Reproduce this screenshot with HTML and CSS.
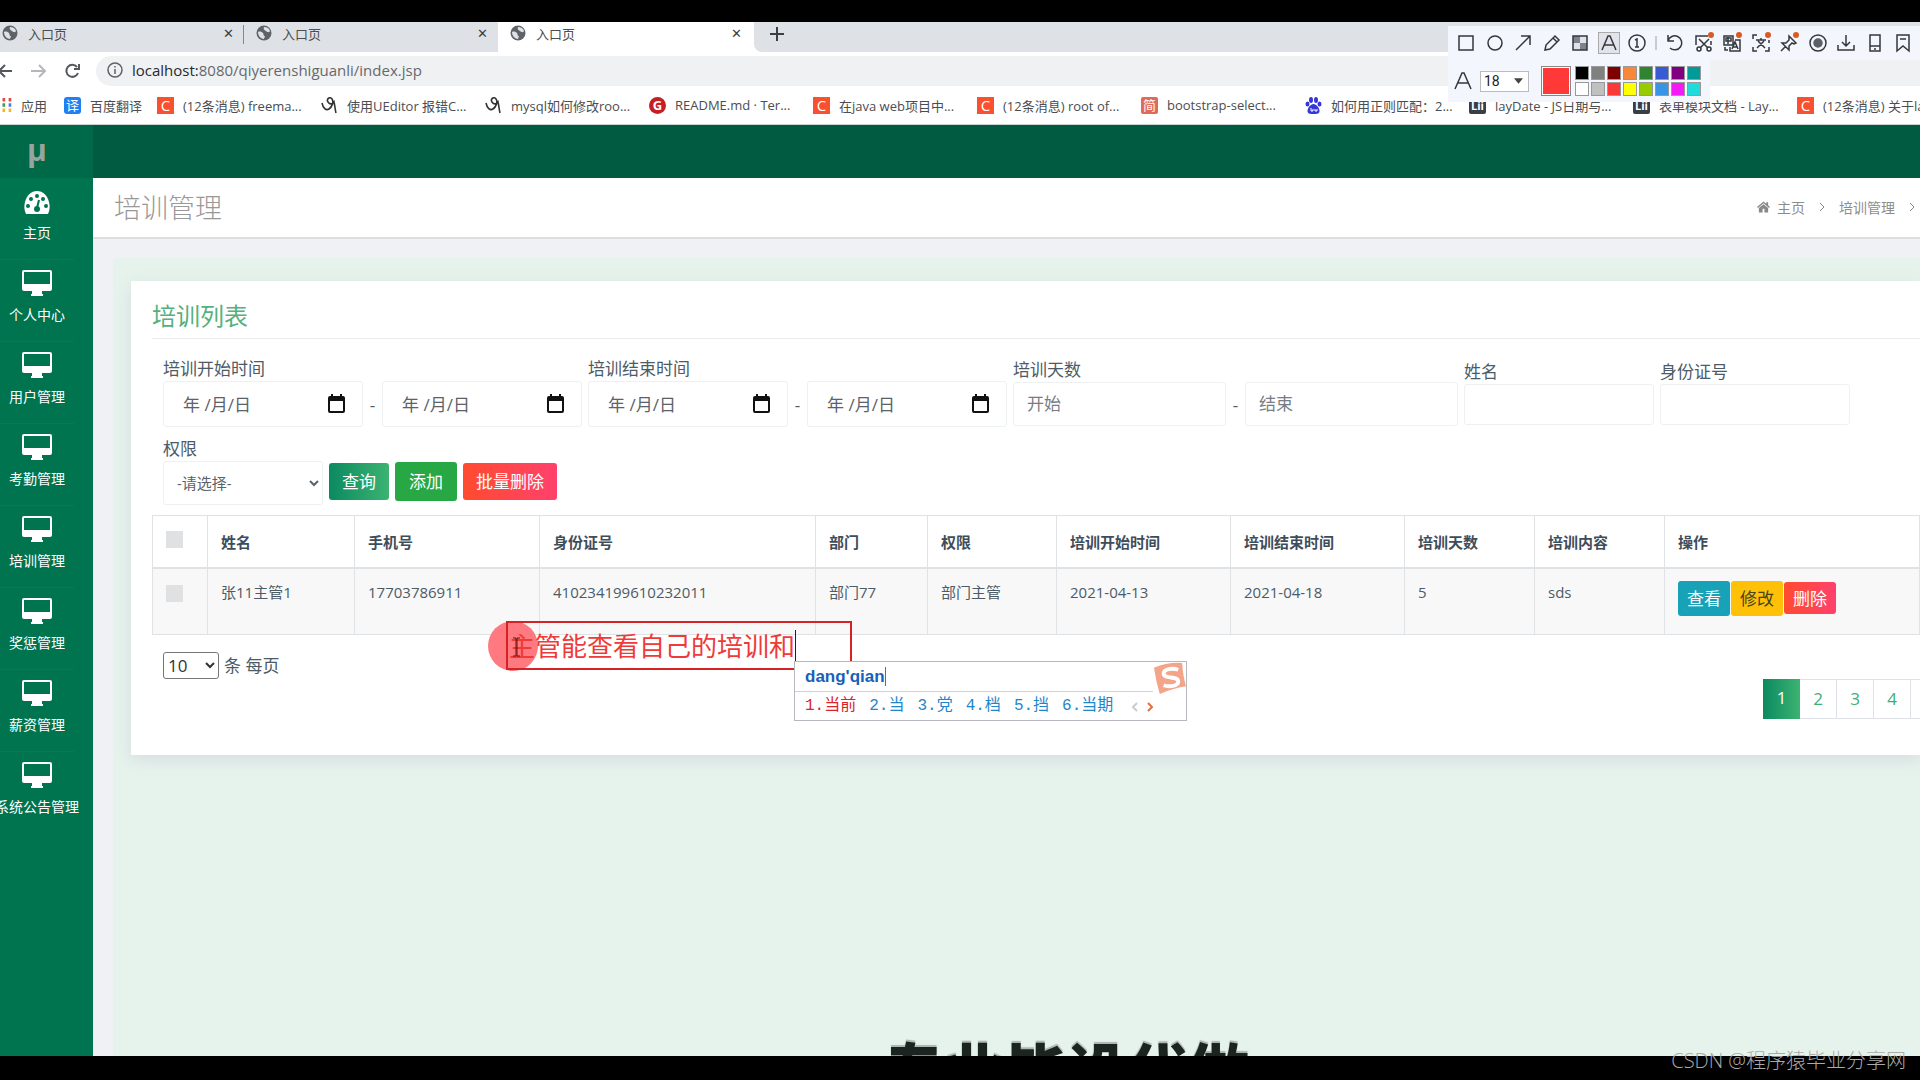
FILE: index.html
```html
<!DOCTYPE html>
<html lang="zh-CN">
<head>
    <meta charset="UTF-8">
    <meta name="viewport" content="width=device-width, initial-scale=1.0">
    <title>入口页</title>
    <link rel="stylesheet" href="styles.css">
</head>
<body>
    <svg class="sprite" aria-hidden="true">
        <symbol id="i-globe" viewBox="0 0 16 16"><circle cx="8" cy="8" r="7.500" fill="#5f6368"/><path d="M2 7c2-1 4 0 5 1s0 3 2 3l-1 3c-3 0-6-3-6-7zM8 2c3 0 5 1 6 4-1 2-3 1-4 0S7 5 8 2z" fill="#dee1e6"/></symbol>
        <symbol id="i-monitor" viewBox="0 0 30 26"><path fill-rule="evenodd" d="M2 0h26a2 2 0 0 1 2 2v17a2 2 0 0 1-2 2h-8v3h1v2H9v-2h1v-3H2a2 2 0 0 1-2-2V2a2 2 0 0 1 2-2zM2 2v12h26V2z" fill="#fff"/></symbol>
        <symbol id="i-calendar" viewBox="0 0 17 19"><path fill-rule="evenodd" d="M3 0h2v2h7V0h2v2h1a2 2 0 0 1 2 2v13a2 2 0 0 1-2 2H2a2 2 0 0 1-2-2V4a2 2 0 0 1 2-2h1zM2 7v10h13V7z" fill="#111"/></symbol>
        <symbol id="i-swirl" viewBox="0 0 17 17"><path d="M1 6c1 5 4 8 7 6s5-7 3-10-6 0-4 3 5 2 6 0c1 4 1 7 2 11" fill="none" stroke="#333" stroke-width="1.600"/></symbol>
    </svg>

    <div class="screen">
        <header class="browser">
            <div class="tabs">
                <div class="tab"><svg><use href="#i-globe"/></svg><span>入口页</span><button aria-label="关闭">✕</button></div>
                <div class="tab tab-second"><svg><use href="#i-globe"/></svg><span>入口页</span><button aria-label="关闭">✕</button></div>
                <div class="tab active"><svg><use href="#i-globe"/></svg><span>入口页</span><button aria-label="关闭">✕</button></div>
                <div class="tab-rest"><button aria-label="新标签页"><svg viewBox="0 0 14 14"><path d="M7 0v14M0 7h14" stroke="#3c4043" stroke-width="2"/></svg></button></div>
            </div>
            <div class="address-row">
                <svg class="nav-icons" viewBox="0 0 96 30" fill="none" stroke="#55585c" stroke-width="2">
                    <path d="M12 15H0M5 9l-6 6 6 6"/>
                    <path d="M31 15h14M39 9l6 6-6 6" stroke="#b4b6b9"/>
                    <path d="M77 11a6 6 0 1 0 1 6M79 8v5h-5"/>
                </svg>
                <div class="address">
                    <svg viewBox="0 0 16 16" fill="none" stroke="#5f6368" stroke-width="1.500"><circle cx="8" cy="8" r="7"/><path d="M8 7v5M8 4v1.500"/></svg>
                    <span><b>localhost:</b>8080/qiyerenshiguanli/index.jsp</span>
                </div>
            </div>
            <nav class="bookmarks">
                <a href="#" class="apps"><svg viewBox="0 0 16 16"><path d="M0 0h3v4H0zM7 0h3v4H7z" fill="#e04a3f"/><path d="M0 6h3v4H0z" fill="#3b9b57"/><path d="M7 6h3v4H7z" fill="#3f7fe8"/><path d="M0 12h3v4H0zM7 12h3v4H7z" fill="#f4b52e"/></svg>应用</a>
                <a href="#" class="short"><i class="fav blue">译</i>百度翻译</a>
                <a href="#"><i class="fav orange">C</i>(12条消息) freema...</a>
                <a href="#"><svg><use href="#i-swirl"/></svg>使用UEditor 报错C...</a>
                <a href="#"><svg><use href="#i-swirl"/></svg>mysql如何修改roo...</a>
                <a href="#"><i class="fav gitee">G</i>README.md · Ter...</a>
                <a href="#"><i class="fav orange">C</i>在java web项目中...</a>
                <a href="#"><i class="fav orange">C</i>(12条消息) root of...</a>
                <a href="#"><i class="fav jian">简</i>bootstrap-select...</a>
                <a href="#"><svg viewBox="0 0 17 17" fill="#3437d6"><ellipse cx="6" cy="3" rx="2" ry="3"/><ellipse cx="11" cy="3" rx="2" ry="3"/><ellipse cx="2.500" cy="7" rx="2" ry="2.500"/><ellipse cx="14.500" cy="7" rx="2" ry="2.500"/><path d="M8.500 7c3 0 6 4 6 7s-3 3-6 3-6 0-6-3 3-7 6-7z"/><path d="M6 11v3h2v-2M10 12v2h2v-2" stroke="#fff" fill="none"/></svg>如何用正则匹配：2...</a>
                <a href="#"><i class="fav dark">Lii</i>layDate - JS日期与...</a>
                <a href="#"><i class="fav dark">Lii</i>表单模块文档 - Lay...</a>
                <a href="#"><i class="fav orange">C</i>(12条消息) 关于la...</a>
            </nav>
        </header>

        <div class="app">
            <aside class="sidebar">
                <div class="logo">μ</div>
                <a href="#"><svg viewBox="0 0 30 26"><path d="M4 26c-2-4-2-8-1-12C5 7 9 3 15 3s10 4 12 11c1 4 1 8-1 12z" fill="#fff"/><g fill="#00734f"><circle cx="6" cy="18" r="2"/><circle cx="9" cy="11" r="2"/><circle cx="15" cy="8" r="2"/><circle cx="21" cy="11" r="2"/><circle cx="24" cy="18" r="2"/><circle cx="15" cy="21" r="3"/></g><path d="M15 20l2-8" stroke="#00734f" stroke-width="2"/></svg><span>主页</span></a>
                <a href="#"><svg><use href="#i-monitor"/></svg><span>个人中心</span></a>
                <a href="#"><svg><use href="#i-monitor"/></svg><span>用户管理</span></a>
                <a href="#"><svg><use href="#i-monitor"/></svg><span>考勤管理</span></a>
                <a href="#"><svg><use href="#i-monitor"/></svg><span>培训管理</span></a>
                <a href="#"><svg><use href="#i-monitor"/></svg><span>奖惩管理</span></a>
                <a href="#"><svg><use href="#i-monitor"/></svg><span>薪资管理</span></a>
                <a href="#"><svg><use href="#i-monitor"/></svg><span>系统公告管理</span></a>
            </aside>

            <main class="main">
                <div class="topbar"></div>
                <div class="page-head">
                    <h1>培训管理</h1>
                    <nav class="breadcrumb">
                        <svg class="home" viewBox="0 0 14 12" fill="#888"><path d="M7 0l3 2.500V1h2v3l2 2-1 1-6-5-6 5-1-1z"/><path d="M7 3l5 4v5H8V8H6v4H2V7z"/></svg>
                        <a href="#">主页</a>
                        <svg class="sep" viewBox="0 0 6 10"><path d="M1 1l4 4-4 4"/></svg>
                        <a href="#">培训管理</a>
                        <svg class="sep" viewBox="0 0 6 10"><path d="M1 1l4 4-4 4"/></svg>
                    </nav>
                </div>

                <div class="content">
                    <section class="card">
                        <h2>培训列表</h2>
                        <form class="filters">
                            <div class="group">
                                <label for="start1">培训开始时间</label>
                                <div class="range">
                                    <div class="date"><input id="start1" type="text" value="年 /月/日"><svg><use href="#i-calendar"/></svg></div>
                                    <span>-</span>
                                    <div class="date"><input aria-label="培训开始时间止" type="text" value="年 /月/日"><svg><use href="#i-calendar"/></svg></div>
                                </div>
                            </div>
                            <div class="group">
                                <label for="end1">培训结束时间</label>
                                <div class="range">
                                    <div class="date"><input id="end1" type="text" value="年 /月/日"><svg><use href="#i-calendar"/></svg></div>
                                    <span>-</span>
                                    <div class="date"><input aria-label="培训结束时间止" type="text" value="年 /月/日"><svg><use href="#i-calendar"/></svg></div>
                                </div>
                            </div>
                            <div class="group">
                                <label for="days">培训天数</label>
                                <div class="range">
                                    <input class="days" id="days" type="text" placeholder="开始">
                                    <span>-</span>
                                    <input class="days" aria-label="培训天数止" type="text" placeholder="结束">
                                </div>
                            </div>
                            <div class="group">
                                <label for="name">姓名</label>
                                <input class="plain" id="name" type="text">
                            </div>
                            <div class="group">
                                <label for="idcard">身份证号</label>
                                <input class="plain" id="idcard" type="text">
                            </div>
                        </form>
                        <div class="filters actions">
                            <div class="group">
                                <label for="role">权限</label>
                                <select class="role" id="role"><option>-请选择-</option></select>
                            </div>
                            <div class="buttons">
                                <button class="btn search">查询</button>
                                <button class="btn add">添加</button>
                                <button class="btn danger">批量删除</button>
                            </div>
                        </div>

                        <table>
                            <colgroup>
                                <col class="c-check"><col class="c-name"><col class="c-phone"><col class="c-id"><col class="c-dept"><col class="c-role">
                                <col class="c-date"><col class="c-date"><col class="c-days"><col class="c-days"><col>
                            </colgroup>
                            <thead>
                                <tr>
                                    <th><input type="checkbox" aria-label="全选"></th>
                                    <th>姓名</th><th>手机号</th><th>身份证号</th><th>部门</th><th>权限</th>
                                    <th>培训开始时间</th><th>培训结束时间</th><th>培训天数</th><th>培训内容</th><th>操作</th>
                                </tr>
                            </thead>
                            <tbody>
                                <tr>
                                    <td><input type="checkbox" aria-label="选择"></td>
                                    <td>张11主管1</td><td>17703786911</td><td>410234199610232011</td><td>部门77</td><td>部门主管</td>
                                    <td>2021-04-13</td><td>2021-04-18</td><td>5</td><td>sds</td>
                                    <td><div class="ops"><button class="btn view">查看</button><button class="btn edit">修改</button><button class="btn danger">删除</button></div></td>
                                </tr>
                            </tbody>
                        </table>

                        <div class="per-page">
                            <select id="size"><option>10</option></select>
                            <label for="size">条 每页</label>
                        </div>
                        <nav class="pagination">
                            <a href="#" class="current">1</a><a href="#">2</a><a href="#">3</a><a href="#">4</a><a href="#" class="more" aria-label="更多"></a>
                        </nav>
                    </section>
                </div>
            </main>
        </div>

        <div class="caption">专业毕设代做</div>
    </div>

    <!-- 截图标注工具栏 -->
    <div class="shot-tools">
        <div class="tools">
            <svg viewBox="0 0 20 20"><path d="M3 3h14v14H3z"/></svg>
            <svg viewBox="0 0 20 20"><circle cx="10" cy="10" r="7"/></svg>
            <svg viewBox="0 0 20 20"><path d="M3 17L17 3M8 3h9v9"/></svg>
            <svg viewBox="0 0 20 20"><path d="M3 17l1-5 9-9 4 4-9 9zM11 5l4 4"/></svg>
            <svg viewBox="0 0 20 20"><path d="M3 3h7v7H3zM10 10h7v7h-7z" fill="#7d828b" stroke="none"/><path d="M10 3h7v7h-7zM3 10h7v7H3z" fill="#dfe2e8" stroke="none"/><path d="M3 3h14v14H3z"/></svg>
            <svg class="chosen" viewBox="0 0 20 20"><path d="M3 17L9 3h2l6 14M5 12h10"/></svg>
            <svg viewBox="0 0 20 20"><circle cx="10" cy="10" r="8"/><path d="M8 7l2-1v8M8 14h4"/></svg>
            <svg class="line" viewBox="0 0 1 20"><path d="M0 3v14" stroke="#bbb"/></svg>
            <svg viewBox="0 0 20 20"><path d="M3 2v6h6M3 8a7 7 0 1 1 2 7"/></svg>
            <svg viewBox="0 0 20 20"><path d="M2 12V3h12M17 8v4M5 6l9 9M15 6l-9 9"/><circle cx="5" cy="16" r="2"/><circle cx="15" cy="16" r="2"/><circle class="dot" cx="17" cy="2" r="3"/></svg>
            <svg viewBox="0 0 20 20"><path d="M2 3h9v9H2zM4 5h5v3H4zM6 4v7M13 7h5v11H8v-4M10 16l3-7 3 7M11 14h4M3 14v3h3"/><circle class="dot" cx="17" cy="2" r="3"/></svg>
            <svg viewBox="0 0 20 20"><path d="M2 6V2h4M2 14v4h4M14 18h4v-4M5 7h10M10 5v2M7 8l7 7M13 8l-7 7M18 7v3"/><circle class="dot" cx="17" cy="2" r="3"/></svg>
            <svg viewBox="0 0 20 20"><path d="M10 3l7 7-2 1-2-1-3 3v4L3 10h4l3-3zM7 13l-5 5"/><circle class="dot" cx="17" cy="2" r="3"/></svg>
            <svg viewBox="0 0 20 20"><circle cx="10" cy="10" r="8"/><circle cx="10" cy="10" r="4" fill="#5b5f66" stroke="#5b5f66"/></svg>
            <svg viewBox="0 0 20 20"><path d="M10 2v11M6 9l4 4 4-4M2 12v5h16v-5"/></svg>
            <svg viewBox="0 0 20 20"><path d="M5 2h10v16H5zM5 13h10M9 16h2"/></svg>
            <svg viewBox="0 0 20 20"><path d="M4 2h12v16l-6-5-6 5zM7 6h6"/></svg>
        </div>
        <div class="tool-options">
            <svg class="letter" viewBox="0 0 20 20"><path d="M2 18L9 2h2l7 16M5 12h10"/></svg>
            <button class="font-size">18<svg viewBox="0 0 10 6"><path d="M0 0h10L5 6z"/></svg></button>
            <div class="picked"></div>
            <div class="palette">
                <i class="p1"></i><i class="p2"></i><i class="p3"></i><i class="p4"></i><i class="p5"></i><i class="p6"></i><i class="p7"></i><i class="p8"></i>
                <i class="p9"></i><i class="p10"></i><i class="p11"></i><i class="p12"></i><i class="p13"></i><i class="p14"></i><i class="p15"></i><i class="p16"></i>
            </div>
        </div>
    </div>

    <!-- 标注文字和输入法 -->
    <div class="pointer"></div>
    <div class="note"><span>主管能查看自己的培训和</span></div>
    <svg class="ibeam" viewBox="0 0 9 20"><path d="M1 1h3v18H1M8 1H5v18h3" fill="none" stroke="#611"/></svg>
    <div class="ime">
        <div class="typed"><span>dang'qian</span></div>
        <div class="candidates">
            <span class="first">1.当前</span><span>2.当</span><span>3.党</span><span>4.档</span><span>5.挡</span><span>6.当期</span>
            <svg viewBox="0 0 24 10" fill="none" stroke-width="2"><path d="M7 1L3 5l4 4" stroke="#ccc"/><path d="M18 1l4 4-4 4" stroke="#e0703c"/></svg>
        </div>
        <svg class="sogou" viewBox="0 0 34 34"><path d="M1 6Q15 0 30 1q1 14 4 24-14 2-27 8Q3 20 1 6z" fill="#f4a488"/><path d="M26 8c-6-2-15-1-15 4 0 6 15 2 15 8 0 5-10 6-15 4" fill="none" stroke="#fff" stroke-width="4"/></svg>
    </div>
    <div class="watermark">CSDN @程序猿毕业分享网</div>
</body>
</html>
```
FILE: styles.css
```css
* {
    box-sizing: border-box;
}

body {
    margin: 0;
    background: #000;
    color: #4c5b66;
    font-family: "Open Sans", "Noto Sans CJK SC", sans-serif;
    font-size: 15px;
    overflow: hidden;
}

a {
    color: inherit;
    text-decoration: none;
}

button, input, select {
    font-family: inherit;
    margin: 0;
}

.sprite {
    display: none;
}

.screen {
    position: relative;
    display: flex;
    flex-direction: column;
    height: 100vh;
    border-top: 22px solid #000;
    border-bottom: 24px solid #000;
    overflow: hidden;
}

/* 浏览器 */
.browser {
    background: #fff;
    color: #4a4d51;
    font-size: 13px;
    border-bottom: 1px solid #c9d3cf;
}

.tabs {
    display: flex;
    height: 30px;
}

.tab {
    position: relative;
    display: flex;
    align-items: center;
    width: 254px;
    padding: 0 20px 8px 2px;
    background: #dee1e6;
}

.tab:first-child::after {
    content: "";
    position: absolute;
    right: 10px;
    top: 3px;
    width: 1px;
    height: 19px;
    background: #85898e;
}

.tab svg {
    width: 16px;
    height: 16px;
    margin-right: 10px;
}

.tab span {
    flex: 1;
}

.tab button {
    padding: 0;
    border: 0;
    background: none;
    color: #3c4043;
    font-size: 13px;
}

.tab.tab-second {
    width: 244px;
    padding-right: 10px;
    border-right: 0;
}

.tab.active {
    width: 256px;
    padding-left: 12px;
    padding-right: 12px;
    background: #fff;
}

.tab-rest {
    flex: 1;
    background: #dee1e6;
    border-radius: 0 0 0 8px;
    padding: 5px 16px;
}

.tab-rest button {
    padding: 0;
    border: 0;
    background: none;
}

.tab-rest svg {
    display: block;
    width: 14px;
    height: 14px;
}

.address-row {
    display: flex;
    margin-top: 4px;
}

.nav-icons {
    width: 96px;
    height: 30px;
}

.address {
    flex: 1;
    display: flex;
    align-items: center;
    gap: 9px;
    height: 30px;
    padding: 0 0 2px 11px;
    background: #f0f1f3;
    border-radius: 15px 0 0 15px;
    color: #65696d;
    font-size: 15px;
}

.address svg {
    width: 16px;
    height: 16px;
}

.address b {
    color: #27292c;
    font-weight: normal;
}

.bookmarks {
    display: flex;
    align-items: center;
    height: 38px;
    padding: 0 0 0 2px;
}

.bookmarks a {
    display: flex;
    align-items: center;
    flex: none;
    width: 164px;
    white-space: nowrap;
}

.bookmarks .apps {
    width: 62px;
}

.bookmarks .short {
    width: 93px;
}

.bookmarks svg {
    width: 17px;
    height: 17px;
    margin-right: 9px;
}

.bookmarks .apps svg {
    width: 15px;
    height: 14px;
    margin-right: 4px;
}

.fav {
    width: 17px;
    height: 17px;
    margin-right: 9px;
    color: #fff;
    font-size: 13px;
    font-style: normal;
    line-height: 17px;
    text-align: center;
}

.fav.blue {
    background: #2080f0;
    border-radius: 3px;
}

.fav.orange {
    background: #f9502f;
    font-size: 15px;
}

.fav.gitee {
    background: #c71d23;
    border-radius: 50%;
    font-weight: bold;
}

.fav.jian {
    background: #e06a58;
    border-radius: 2px;
}

.fav.dark {
    background: #393d49;
    border-radius: 2px;
    font-size: 11px;
    font-weight: bold;
}

/* 后台页面 */
.app {
    flex: 1;
    display: flex;
    min-height: 0;
}

.sidebar {
    flex: none;
    width: 93px;
    background: #00734f;
    color: #fff;
    font-size: 14px;
    overflow: hidden;
}

.logo {
    height: 53px;
    padding-right: 19px;
    background: #006948;
    color: #96a59e;
    font-size: 30px;
    font-weight: 700;
    line-height: 50px;
    text-align: center;
}

.sidebar a {
    display: flex;
    flex-direction: column;
    align-items: center;
    width: 74px;
    height: 82px;
    padding-top: 10px;
    border-bottom: 1px solid #057a56;
    white-space: nowrap;
}

.sidebar a:last-child {
    border-bottom: 0;
}

.sidebar svg {
    flex: none;
    width: 30px;
    height: 26px;
    margin-bottom: 8px;
}

.sidebar span {
    line-height: 22px;
}

.main {
    flex: 1;
    min-width: 0;
    display: flex;
    flex-direction: column;
    background: #eff1f5;
}

.topbar {
    flex: none;
    height: 53px;
    background: #005b40;
}

.page-head {
    flex: none;
    display: flex;
    align-items: center;
    justify-content: space-between;
    height: 61px;
    padding: 0 5px 2px 21px;
    background: #fff;
    border-bottom: 2px solid #dcdfe2;
}

h1 {
    margin: 0;
    color: #999;
    font-size: 27px;
    font-weight: 300;
}

.breadcrumb {
    display: flex;
    align-items: center;
    color: #8d8d8d;
    font-size: 14px;
}

.breadcrumb .home {
    width: 13px;
    height: 12px;
    margin-right: 7px;
}

.breadcrumb .sep {
    width: 6px;
    height: 10px;
    margin: 0 14px;
    fill: none;
    stroke: #888;
}

.breadcrumb .sep:last-child {
    margin-right: 0;
}

.content {
    flex: 1;
    margin: 19px 0 0 20px;
    padding: 23px 0 0 18px;
    background: #e6f3ec;
    min-height: 0;
}

.card {
    height: 474px;
    padding: 18px 0 0 21px;
    background: #fff;
    box-shadow: 0 5px 16px #d5dde0;
}

h2 {
    margin: 0;
    height: 40px;
    color: #55b07d;
    font-size: 24px;
    font-weight: normal;
    line-height: 34px;
    border-bottom: 1px solid #e9ecef;
}

.filters {
    display: flex;
    align-items: center;
    gap: 6px;
    margin: 17px 0 0 11px;
    font-size: 17px;
}

.filters.actions {
    align-items: flex-end;
    margin-top: 9px;
}

.group {
    flex: none;
}

.group label {
    display: block;
    line-height: 25px;
}

.range {
    display: flex;
    align-items: center;
}

.range span {
    width: 19px;
    text-align: center;
}

.group input, .role {
    display: block;
    border: 1px solid #edf1f2;
    border-radius: 3px;
    background: #fff;
    color: #5b6269;
    font-size: 17px;
}

.date {
    position: relative;
    width: 200px;
}

.date input {
    width: 100%;
    height: 46px;
    padding: 0 50px 2px 19px;
}

.date svg {
    position: absolute;
    right: 18px;
    top: 13px;
    width: 17px;
    height: 19px;
}

.group .days {
    width: 213px;
    height: 44px;
    padding: 0 13px 2px;
}

.group input::placeholder {
    color: #777d84;
}

.group .plain {
    width: 190px;
    height: 41px;
}

.group .role {
    width: 160px;
    height: 44px;
    padding-left: 9px;
    font-size: 15px;
}

.buttons {
    display: flex;
    align-items: center;
    gap: 6px;
    margin-bottom: 4px;
}

.btn {
    height: 37px;
    padding: 0 13px 2px;
    border: 0;
    border-radius: 3px;
    color: #fff;
    font-size: 17px;
    white-space: nowrap;
}

.search {
    background: linear-gradient(to right, #0b8a61, #3cb371);
}

.btn.add {
    height: 39px;
    padding: 0 14px 2px;
    background: #28a745;
}

.danger {
    background: linear-gradient(to right, #ff4b2f, #ff416c);
}

table {
    width: 100%;
    margin-top: 10px;
    border-collapse: collapse;
    table-layout: fixed;
}

.c-check { width: 55px; }
.c-name { width: 147px; }
.c-phone { width: 185px; }
.c-id { width: 276px; }
.c-dept { width: 112px; }
.c-role { width: 129px; }
.c-date { width: 174px; }
.c-days { width: 130px; }

th, td {
    padding: 10px 13px 0;
    border: 1px solid #e0e3e6;
    text-align: left;
    vertical-align: top;
    line-height: 26px;
    white-space: nowrap;
}

th {
    height: 52px;
    padding-top: 13px;
    border-bottom-width: 2px;
    color: #3e4d5a;
}

td {
    height: 67px;
    background: #f8f8f9;
}

table input {
    appearance: none;
    display: block;
    width: 17px;
    height: 17px;
    margin-top: 2px;
    background: #dfe1e3;
}

td input {
    margin-top: 6px;
}

.ops {
    display: flex;
    align-items: center;
    gap: 1px;
    padding-top: 2px;
}

.ops .btn {
    height: 35px;
    padding: 0 9px 2px;
}

.ops .danger {
    height: 32px;
}

.view {
    background: #17a2b8;
}

.ops .edit {
    background: #ffc107;
    color: #4a431f;
}

.per-page {
    display: flex;
    align-items: center;
    gap: 5px;
    margin: 17px 0 0 11px;
    font-size: 17px;
}

.per-page select {
    width: 56px;
    height: 27px;
    border: 1px solid #767676;
    border-radius: 3px;
    background: #fff;
    color: #333;
    font-size: 17px;
}

.per-page label {
    line-height: 27px;
}

.pagination {
    display: flex;
    justify-content: flex-end;
}

.pagination a {
    width: 37px;
    height: 40px;
    border: 1px solid #dee2e6;
    border-left: 0;
    color: #3fae76;
    font-size: 17px;
    line-height: 38px;
    text-align: center;
}

.pagination .more {
    width: 9px;
    border-right: 0;
}

.pagination .current {
    border: 0;
    background: linear-gradient(to right, #0b8a61, #3cb371);
    color: #fff;
}

.caption {
    position: absolute;
    left: 0;
    right: 0;
    bottom: -56px;
    padding-left: 212px;
    color: #1c2422;
    font-size: 61px;
    font-weight: 900;
    line-height: 80px;
    text-align: center;
    text-shadow: 0 -2px 1px #aab5b0;
}

/* 截图工具 */
.shot-tools {
    position: absolute;
    top: 26px;
    right: 0;
    width: 472px;
}

.tools {
    display: flex;
    align-items: center;
    justify-content: space-between;
    height: 34px;
    padding: 0 7px 0 8px;
    background: #f3f6fd;
}

.shot-tools svg {
    width: 20px;
    height: 20px;
    fill: none;
    stroke: #34373c;
    stroke-width: 1.5;
    overflow: visible;
}

.shot-tools .line {
    width: 1px;
}

.shot-tools .dot {
    fill: #dc5a21;
    stroke: none;
}

.shot-tools .chosen {
    background: #e1e4ea;
    outline: 1px solid #aaa;
}

.tool-options {
    display: flex;
    align-items: center;
    width: 262px;
    height: 42px;
    padding-left: 5px;
    background: #f3f6fd;
}

.font-size {
    display: flex;
    align-items: center;
    justify-content: space-between;
    width: 49px;
    height: 21px;
    margin: 0 12px 0 7px;
    padding: 0 5px 0 3px;
    border: 1px solid #bbb;
    background: #fff;
    color: #222;
    font: 14px Roboto, sans-serif;
}

.shot-tools .font-size svg {
    width: 9px;
    height: 6px;
    fill: #444;
    stroke: none;
}

.picked {
    width: 30px;
    height: 30px;
    margin-right: 4px;
    border: 1px solid #888;
    background: #ff3838;
    box-shadow: inset 0 0 0 1px #fff;
}

.palette {
    display: grid;
    grid-template-columns: repeat(8, 14px);
    gap: 2px;
}

.palette i {
    height: 14px;
    border: 1px solid #999;
}

.p1 { background: #000; }
.p2 { background: #808080; }
.p3 { background: #800000; }
.p4 { background: #f7883a; }
.p5 { background: #308430; }
.p6 { background: #385ad3; }
.p7 { background: #800080; }
.p8 { background: #009a98; }
.p9 { background: #fff; }
.p10 { background: #c0c0c0; }
.p11 { background: #fb3838; }
.p12 { background: #ffff00; }
.p13 { background: #99cc00; }
.p14 { background: #3894e4; }
.p15 { background: #f31af3; }
.p16 { background: #1edcdc; }

.pointer {
    position: absolute;
    left: 488px;
    top: 621px;
    width: 50px;
    height: 50px;
    border-radius: 50%;
    background: #ff7a80;
}

.note {
    position: absolute;
    left: 506px;
    top: 621px;
    width: 346px;
    height: 49px;
    padding-left: 1px;
    border: 2px solid #d62222;
    color: #ef3a3a;
    font-size: 26px;
    line-height: 46px;
    white-space: nowrap;
}

.note span {
    display: inline-block;
    height: 33px;
    line-height: 33px;
    border-right: 1px solid #222;
}

.ibeam {
    position: absolute;
    left: 512px;
    top: 637px;
    width: 9px;
    height: 20px;
}

.ime {
    position: absolute;
    left: 794px;
    top: 661px;
    width: 393px;
    height: 60px;
    border: 1px solid #b5b9bf;
    background: #fff;
}

.typed {
    width: 358px;
    height: 30px;
    padding: 5px 0 0 10px;
    border-bottom: 1px solid #ccd3da;
    color: #1861b8;
    font: bold 17px/20px "Liberation Sans", sans-serif;
}

.typed span {
    border-right: 1px solid #e33;
}

.candidates {
    display: flex;
    align-items: center;
    gap: 13px;
    padding-left: 10px;
    color: #1f86cc;
    font: 16px/29px "Liberation Mono", "Noto Sans CJK SC", monospace;
    white-space: nowrap;
}

.candidates .first {
    color: #d8232a;
}

.candidates svg {
    width: 24px;
    height: 10px;
    margin-left: 4px;
}

.sogou {
    position: absolute;
    top: 0;
    right: 0;
    width: 33px;
    height: 33px;
}

.watermark {
    position: absolute;
    right: 14px;
    bottom: 6px;
    color: #aaa;
    font-size: 20px;
    font-weight: 300;
    line-height: 26px;
}
```
